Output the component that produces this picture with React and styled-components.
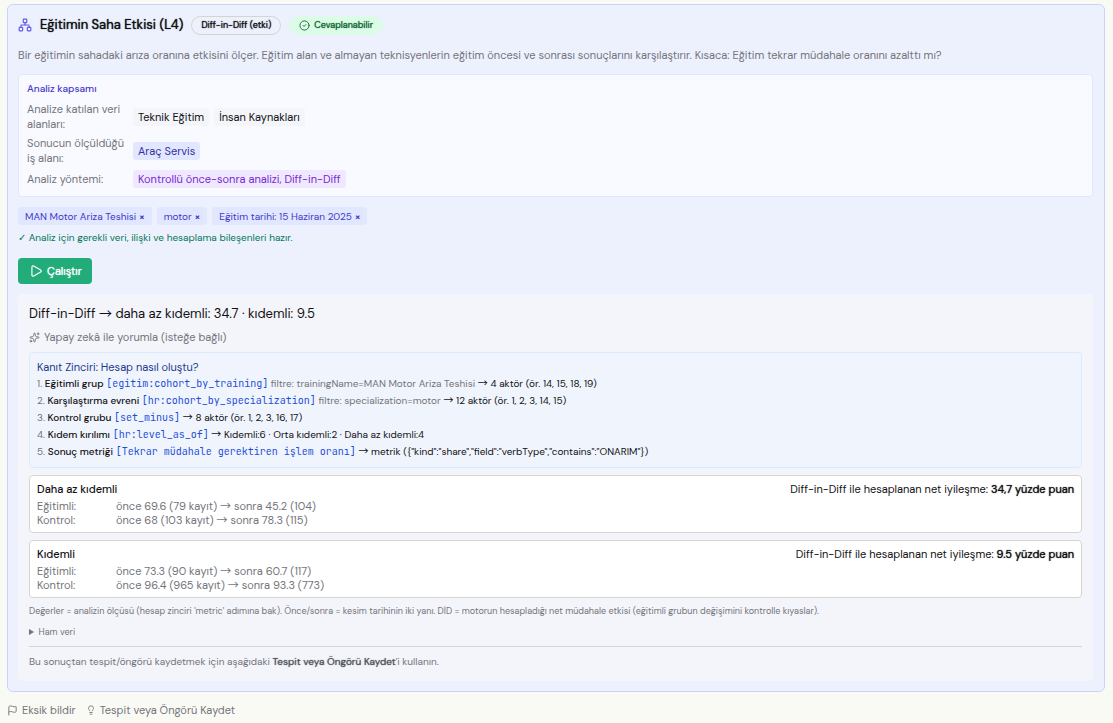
import styled, { createGlobalStyle, css } from "styled-components";
import { CircleCheck, Flag, Lightbulb, Network, Play, Sparkles } from "lucide-react";

const GlobalStyle = createGlobalStyle`
  * {
    box-sizing: border-box;
  }
  body {
    margin: 0;
    background: #fafaf5;
    color: #111114;
    font-family: "DM Sans", Roboto, sans-serif;
    font-size: 11px;
    line-height: 16px;
  }
  button {
    font-family: inherit;
  }
`;

// regular letter widths, thickened strokes
const strong = css`
  font-weight: 400;
  text-shadow: 0 0 1px currentColor;
`;

const Page = styled.main`
  padding: 4px 8px 0 7px;
`;

const Card = styled.section`
  padding: 10px 11px 10px 10px;
  border: 1px solid #c7d2fe;
  border-radius: 6px;
  background: #edf1fe;
`;

const Header = styled.header`
  display: flex;
  align-items: center;
  gap: 8px;
  height: 20px;
  svg {
    flex: none;
  }
`;

const Title = styled.h2`
  margin: 0;
  font-size: 13px;
  line-height: 18px;
  ${strong}
`;

const Pill = styled.span`
  display: inline-flex;
  align-items: center;
  gap: 4px;
  height: 19px;
  padding: 0 9px;
  border: 1px solid ${(p) => (p.$ok ? "#dcfce7" : "#d6d5cd")};
  border-radius: 10px;
  background: ${(p) => (p.$ok ? "#dcfce7" : "transparent")};
  color: ${(p) => (p.$ok ? "#166534" : "#111114")};
  font-size: 9px;
  ${strong}
`;

const Description = styled.p`
  margin: 12px 0 11px;
  color: #73747b;
`;

const Scope = styled.div`
  padding: 7px 8px 8px;
  border: 1px solid #e0e7ff;
  border-radius: 4px;
  background: #f9faff;
`;

const ScopeTitle = styled.h3`
  margin: 0 0 6px;
  color: #4338ca;
  font-size: 10px;
  font-weight: 500;
  line-height: 14px;
`;

const ScopeList = styled.dl`
  display: grid;
  grid-template-columns: 98px 1fr;
  align-items: center;
  gap: 4px 8px;
  margin: 0;
  dt {
    color: #73747b;
    line-height: 15px;
  }
  dd {
    display: flex;
    gap: 5px;
    margin: 0;
  }
`;

const TAG_TONES = {
  plain: ["#f3f5f9", "#111114"],
  indigo: ["#e0e7ff", "#3730a3"],
  purple: ["#f0e8ff", "#7529d3"],
};

const Tag = styled.span`
  height: 18px;
  padding: 0 5px;
  border-radius: 3px;
  background: ${(p) => TAG_TONES[p.$tone][0]};
  color: ${(p) => TAG_TONES[p.$tone][1]};
  line-height: 18px;
`;

const Filters = styled.div`
  display: flex;
  gap: 5px;
  margin-top: 10px;
`;

const Filter = styled.button`
  height: 18px;
  padding: 0 7px;
  border: none;
  border-radius: 3px;
  background: #e0e7ff;
  color: #4338ca;
  font-size: 10px;
  cursor: pointer;
  b {
    font-weight: 700;
  }
`;

const Ready = styled.p`
  margin: 5px 0 12px;
  color: #047857;
  font-size: 10px;
`;

const RunButton = styled.button`
  display: flex;
  align-items: center;
  gap: 4px;
  height: 26px;
  padding: 0 10px 0 11px;
  border: none;
  border-radius: 4px;
  background: #21ac7a;
  color: white;
  font-size: 11px;
  cursor: pointer;
  ${strong}
`;

const Result = styled.div`
  margin-top: 10px;
  padding: 11px;
  border-radius: 4px;
  background: #f4f5fa;
`;

const Headline = styled.p`
  margin: 0;
  font-size: 13px;
  line-height: 18px;
`;

const ArrowGlyph = styled.span`
  font-family: "Noto Sans", "Noto Sans CJK SC", sans-serif;
  line-height: 1;
`;

const TextButton = styled.button`
  display: inline-flex;
  align-items: center;
  gap: 4px;
  height: 16px;
  padding: 0;
  border: none;
  background: none;
  color: #73747b;
  font-size: 11px;
  cursor: pointer;
`;

const Interpret = styled.div`
  display: flex;
  margin: 6px 0 7px;
`;

const Evidence = styled.div`
  padding: 7px;
  border: 1px solid #dbeafe;
  border-radius: 4px;
  background: #f0f5fd;
`;

const EvidenceTitle = styled.h3`
  margin: 0;
  color: #1e3a8a;
  font-size: 11px;
  font-weight: 400;
  line-height: 15px;
`;

const Steps = styled.ol`
  margin: 0;
  padding: 0;
  list-style: none;
  font-size: 10px;
  line-height: 17px;
`;

const Muted = styled.span`
  color: #73747b;
`;

const Name = styled.span`
  font-weight: 500;
`;

const Code = styled.code`
  color: #1d4ed8;
  font-family: "JetBrains Mono", "DejaVu Sans Mono", monospace;
  font-size: 10px;
`;

const Group = styled.article`
  margin-top: 7px;
  padding: 5px 7px;
  border: 1px solid #d6d5cd;
  border-radius: 4px;
  background: white;
`;

const GroupHead = styled.div`
  display: flex;
  justify-content: space-between;
  margin-bottom: 2px;
  h4 {
    margin: 0;
    font-size: 11px;
    font-weight: 500;
  }
  b {
    ${strong}
  }
`;

const Row = styled.div`
  display: grid;
  grid-template-columns: 79px 1fr;
  color: #73747b;
  line-height: 14px;
`;

const Caption = styled.p`
  margin: 5px 0;
  color: #73747b;
  font-size: 9px;
`;

const Raw = styled.details`
  color: #73747b;
  font-size: 9px;
  summary {
    cursor: pointer;
  }
`;

const Hint = styled.p`
  margin: 6px 0 0;
  padding-top: 7px;
  border-top: 1px solid #d6d5cd;
  color: #73747b;
  font-size: 10px;
  b {
    color: #55565c;
    ${strong}
  }
`;

const Footer = styled.footer`
  display: flex;
  gap: 10px;
  padding-top: 10px;
`;

const filters = ["MAN Motor Ariza Teshisi", "motor", "Eğitim tarihi: 15 Haziran 2025"];

const steps = [
  {
    name: "Eğitimli grup",
    code: "egitim:cohort_by_training",
    filter: "filtre: trainingName=MAN Motor Ariza Teshisi",
    out: "4 aktör (ör. 14, 15, 18, 19)",
  },
  {
    name: "Karşılaştırma evreni",
    code: "hr:cohort_by_specialization",
    filter: "filtre: specialization=motor",
    out: "12 aktör (ör. 1, 2, 3, 14, 15)",
  },
  { name: "Kontrol grubu", code: "set_minus", out: "8 aktör (ör. 1, 2, 3, 16, 17)" },
  { name: "Kıdem kırılımı", code: "hr:level_as_of", out: "Kıdemli:6 · Orta kıdemli:2 · Daha az kıdemli:4" },
  {
    name: "Sonuç metriği",
    code: "Tekrar müdahale gerektiren işlem oranı",
    out: 'metrik ({"kind":"share","field":"verbType","contains":"ONARIM"})',
  },
];

const groups = [
  {
    name: "Daha az kıdemli",
    gain: "34,7 yüzde puan",
    trained: ["önce 69.6 (79 kayıt)", "sonra 45.2 (104)"],
    control: ["önce 68 (103 kayıt)", "sonra 78.3 (115)"],
  },
  {
    name: "Kıdemli",
    gain: "9.5 yüzde puan",
    trained: ["önce 73.3 (90 kayıt)", "sonra 60.7 (117)"],
    control: ["önce 96.4 (965 kayıt)", "sonra 93.3 (773)"],
  },
];

const Arrow = () => <ArrowGlyph>→</ArrowGlyph>;

const Change = ({ label, values }) => (
  <Row>
    <span>{label}:</span>
    <span>
      {values[0]} <Arrow /> {values[1]}
    </span>
  </Row>
);

const App = () => {
  return (
    <Page>
      <GlobalStyle />
      <Card>
        <Header>
          <Network size={14} color="#6358e8" />
          <Title>Eğitimin Saha Etkisi (L4)</Title>
          <Pill>Diff-in-Diff (etki)</Pill>
          <Pill $ok>
            <CircleCheck size={11} />
            Cevaplanabilir
          </Pill>
        </Header>
        <Description>
          Bir eğitimin sahadaki arıza oranına etkisini ölçer. Eğitim alan ve almayan teknisyenlerin eğitim öncesi ve
          sonrası sonuçlarını karşılaştırır. Kısaca: Eğitim tekrar müdahale oranını azalttı mı?
        </Description>

        <Scope>
          <ScopeTitle>Analiz kapsamı</ScopeTitle>
          <ScopeList>
            <dt>Analize katılan veri alanları:</dt>
            <dd>
              <Tag $tone="plain">Teknik Eğitim</Tag>
              <Tag $tone="plain">İnsan Kaynakları</Tag>
            </dd>
            <dt>Sonucun ölçüldüğü iş alanı:</dt>
            <dd>
              <Tag $tone="indigo">Araç Servis</Tag>
            </dd>
            <dt>Analiz yöntemi:</dt>
            <dd>
              <Tag $tone="purple">Kontrollü önce-sonra analizi, Diff-in-Diff</Tag>
            </dd>
          </ScopeList>
        </Scope>

        <Filters>
          {filters.map((f) => (
            <Filter key={f}>
              {f} <b>×</b>
            </Filter>
          ))}
        </Filters>
        <Ready>✓ Analiz için gerekli veri, ilişki ve hesaplama bileşenleri hazır.</Ready>
        <RunButton>
          <Play size={14} />
          Çalıştır
        </RunButton>

        <Result>
          <Headline>
            Diff-in-Diff <Arrow /> daha az kıdemli: 34.7 · kıdemli: 9.5
          </Headline>
          <Interpret>
            <TextButton>
              <Sparkles size={11} />
              Yapay zekâ ile yorumla (isteğe bağlı)
            </TextButton>
          </Interpret>

          <Evidence>
            <EvidenceTitle>Kanıt Zinciri: Hesap nasıl oluştu?</EvidenceTitle>
            <Steps>
              {steps.map((s, i) => (
                <li key={s.code}>
                  <Muted>{i + 1}.</Muted> <Name>{s.name}</Name> <Code>[{s.code}]</Code>{" "}
                  {s.filter && <Muted>{s.filter} </Muted>}
                  <Arrow /> {s.out}
                </li>
              ))}
            </Steps>
          </Evidence>

          {groups.map((g) => (
            <Group key={g.name}>
              <GroupHead>
                <h4>{g.name}</h4>
                <span>
                  Diff-in-Diff ile hesaplanan net iyileşme: <b>{g.gain}</b>
                </span>
              </GroupHead>
              <Change label="Eğitimli" values={g.trained} />
              <Change label="Kontrol" values={g.control} />
            </Group>
          ))}

          <Caption>
            Değerler = analizin ölçüsü (hesap zinciri 'metric' adımına bak). Önce/sonra = kesim tarihinin iki yanı. DİD =
            motorun hesapladığı net müdahale etkisi (eğitimli grubun değişimini kontrolle kıyaslar).
          </Caption>
          <Raw>
            <summary>Ham veri</summary>
          </Raw>
          <Hint>
            Bu sonuçtan tespit/öngörü kaydetmek için aşağıdaki <b>Tespit veya Öngörü Kaydet</b>'i kullanın.
          </Hint>
        </Result>
      </Card>
      <Footer>
        <TextButton>
          <Flag size={11} />
          Eksik bildir
        </TextButton>
        <TextButton>
          <Lightbulb size={10} />
          Tespit veya Öngörü Kaydet
        </TextButton>
      </Footer>
    </Page>
  );
};

export default App;
